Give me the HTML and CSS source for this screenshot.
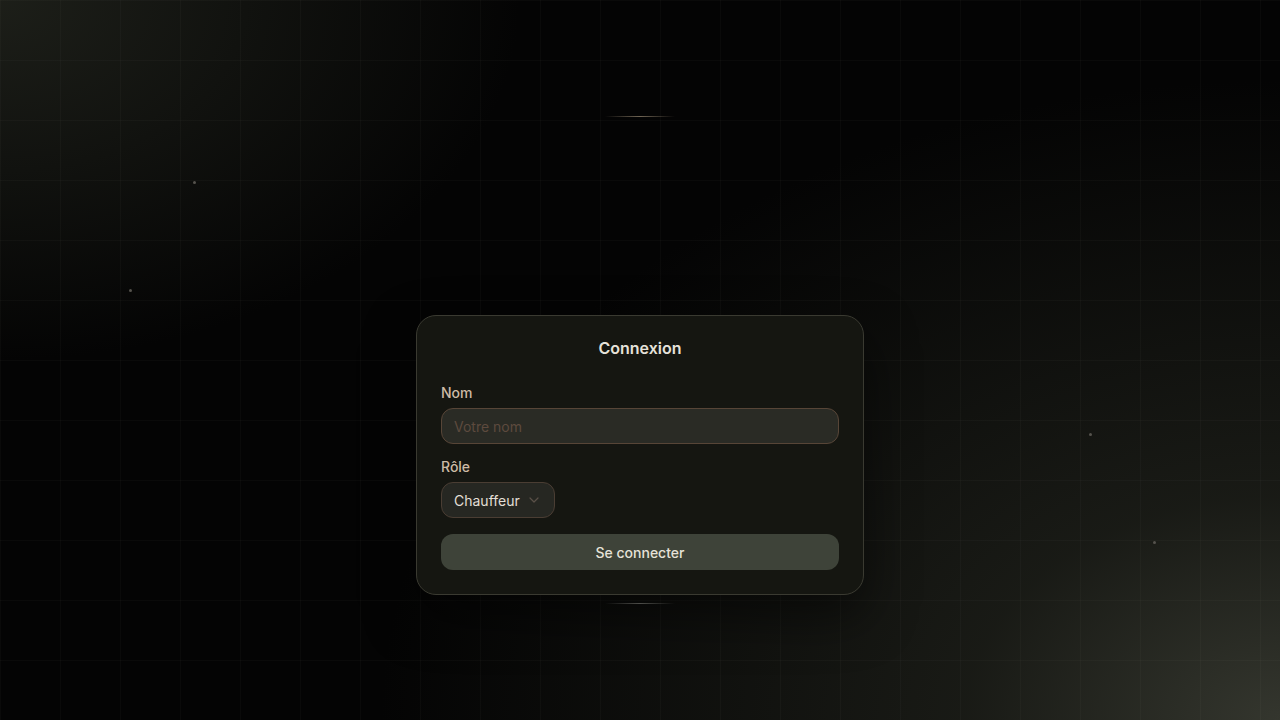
FILE: index.html
```html
<!DOCTYPE html>
<html lang="fr">
<head>
<meta charset="utf-8">
<title>Connexion</title>
<link rel="stylesheet" href="styles.css">
</head>
<body>
<div class="scene">
  <div class="grid"></div>
  <span class="dot d1"></span>
  <span class="dot d2"></span>
  <span class="dot d3"></span>
  <span class="dot d4"></span>
  <span class="glow glow-top"></span>
  <span class="glow glow-bottom"></span>
  <form class="card">
    <h1 class="title">Connexion</h1>
    <div class="field">
      <label class="label" for="nom">Nom</label>
      <input class="input" id="nom" type="text" placeholder="Votre nom">
    </div>
    <div class="field">
      <label class="label" for="role">Rôle</label>
      <div class="select-wrap">
        <select class="select" id="role">
          <option>Chauffeur</option>
          <option>Passager</option>
        </select>
        <svg class="chevron" width="10" height="6" viewBox="0 0 10 6" fill="none"><path d="M1 1l4 4 4-4" stroke="#5a5048" stroke-width="1.2" stroke-linecap="round" stroke-linejoin="round"/></svg>
      </div>
    </div>
    <button class="button" type="button">Se connecter</button>
  </form>
</div>
</body>
</html>
```

FILE: styles.css
```css
* { box-sizing: border-box; }
html, body { margin: 0; padding: 0; height: 100%; }
body {
  font-family: Inter, "Noto Sans", sans-serif;
  background: #040404;
  overflow: hidden;
}
.scene {
  position: relative;
  width: 1280px;
  height: 720px;
  display: flex;
  align-items: flex-start;
  justify-content: center;
  padding-top: 315px;
  background:
    radial-gradient(ellipse 520px 360px at 0% 0%, rgba(30,32,26,0.95), rgba(30,32,26,0) 100%),
    radial-gradient(ellipse 900px 640px at 100% 100%, rgba(52,54,46,1), rgba(36,38,31,0.65) 35%, rgba(20,21,17,0) 100%),
    #040404;
}
.grid {
  position: absolute;
  inset: 0;
  background-image:
    linear-gradient(to right, rgba(255,255,240,0.025) 1px, transparent 1px),
    linear-gradient(to bottom, rgba(255,255,240,0.025) 1px, transparent 1px);
  background-size: 60px 60px;
  pointer-events: none;
}
.dot {
  position: absolute;
  width: 3px;
  height: 3px;
  border-radius: 50%;
  background: #55534d;
}
.d1 { left: 193px; top: 181px; }
.d2 { left: 129px; top: 289px; }
.d3 { left: 1089px; top: 433px; }
.d4 { left: 1153px; top: 541px; }
.glow {
  position: absolute;
  left: 605px;
  width: 70px;
  height: 1px;
  background: linear-gradient(90deg, rgba(200,180,150,0), rgba(200,180,150,0.55) 50%, rgba(200,180,150,0));
}
.glow-top { top: 116px; }
.glow-bottom { top: 603px; background: linear-gradient(90deg, rgba(220,220,210,0), rgba(220,220,210,0.5) 50%, rgba(220,220,210,0)); }

.card {
  position: relative;
  width: 448px;
  margin: 0;
  padding: 20px 24px 24px;
  background: rgba(22,23,18,0.97);
  border: 1px solid #3a3a31;
  border-radius: 20px;
  box-shadow: 0 20px 50px rgba(0,0,0,0.5);
  display: flex;
  flex-direction: column;
}
.title {
  margin: 0 0 23px;
  font-size: 16px;
  line-height: 24px;
  font-weight: 600;
  color: #e6e2da;
  text-align: center;
}
.field {
  display: flex;
  flex-direction: column;
  margin-bottom: 13px;
}
.label {
  font-size: 14px;
  line-height: 20px;
  font-weight: 500;
  color: #cdbba6;
  margin-bottom: 5px;
}
.input {
  height: 36px;
  width: 100%;
  padding: 0 12px;
  border-radius: 12px;
  border: 1px solid #574537;
  background: #2a2b25;
  color: #e6e2da;
  font-family: inherit;
  font-size: 14px;
  outline: none;
}
.input::placeholder { color: #5d4a3e; }
.select-wrap {
  position: relative;
  width: 114px;
}
.select {
  appearance: none;
  -webkit-appearance: none;
  width: 114px;
  height: 36px;
  padding: 0 30px 0 12px;
  border-radius: 12px;
  border: 1px solid #4a3d33;
  background: #262722;
  color: #e3dfd6;
  font-family: inherit;
  font-size: 14px;
  outline: none;
}
.chevron {
  position: absolute;
  left: 88px;
  top: 15px;
  pointer-events: none;
}
.button {
  margin-top: 3px;
  height: 36px;
  width: 100%;
  border: none;
  border-radius: 12px;
  background: #3e4339;
  color: #e6e2d8;
  font-family: inherit;
  font-size: 14px;
  font-weight: 500;
}
```
